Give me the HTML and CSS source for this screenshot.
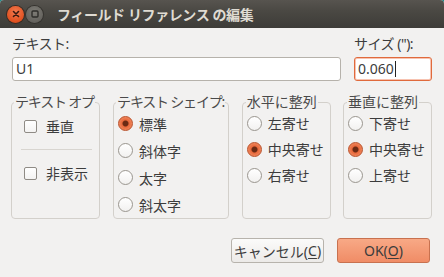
FILE: index.html
```html
<!DOCTYPE html>
<html lang="ja">
<head>
<meta charset="utf-8">
<link rel="stylesheet" href="styles.css">
</head>
<body>
<div class="window">
  <div class="titlebar">
    <span class="wbtn close"><svg width="16" height="16" viewBox="0 0 16 16"><path d="M5.5 5.5 L10.5 10.5 M10.5 5.5 L5.5 10.5" stroke="#3a1a10" stroke-width="1.6" stroke-linecap="round"/></svg></span>
    <span class="wbtn max"><svg width="16" height="16" viewBox="0 0 16 16"><rect x="5" y="5" width="6" height="6" rx="1" fill="none" stroke="#2e2d2a" stroke-width="1.4"/></svg></span>
    <span class="title">フィールド リファレンス の編集</span>
  </div>
  <div class="content">
    <div class="toprow">
      <div class="field grow">
        <div class="flabel">テキスト:</div>
        <div class="entry">U1</div>
      </div>
      <div class="field size">
        <div class="flabel">サイズ ("):</div>
        <div class="entry focus">0.060<span class="caret"></span></div>
      </div>
    </div>
    <div class="groups">
      <fieldset class="grp g1">
        <legend class="tight">テキスト オプ</legend>
        <div class="crow first"><span class="cbox"></span><span>垂直</span></div>
        <div class="sep"></div>
        <div class="crow"><span class="cbox"></span><span>非表示</span></div>
      </fieldset>
      <fieldset class="grp g2">
        <legend class="tight">テキスト シェイプ:</legend>
        <div class="rrow tall"><span class="radio on"></span><span>標準</span></div>
        <div class="rrow tall"><span class="radio"></span><span>斜体字</span></div>
        <div class="rrow tall"><span class="radio"></span><span>太字</span></div>
        <div class="rrow tall"><span class="radio"></span><span>斜太字</span></div>
      </fieldset>
      <fieldset class="grp g3">
        <legend>水平に整列</legend>
        <div class="rrow"><span class="radio"></span><span>左寄せ</span></div>
        <div class="rrow"><span class="radio on"></span><span>中央寄せ</span></div>
        <div class="rrow"><span class="radio"></span><span>右寄せ</span></div>
      </fieldset>
      <fieldset class="grp g4">
        <legend>垂直に整列</legend>
        <div class="rrow"><span class="radio"></span><span>下寄せ</span></div>
        <div class="rrow"><span class="radio on"></span><span>中央寄せ</span></div>
        <div class="rrow"><span class="radio"></span><span>上寄せ</span></div>
      </fieldset>
    </div>
    <div class="buttons">
      <div class="btn">キャンセル(<u>C</u>)</div>
      <div class="btn ok">OK(<u>O</u>)</div>
    </div>
  </div>
</div>
</body>
</html>
```
FILE: styles.css
```css
html { background: #1d8c8c; }
body {
  margin: 0;
  width: 444px;
  height: 277px;
  overflow: hidden;
  font-family: "Noto Sans", "Noto Sans CJK JP", sans-serif;
  font-size: 14px;
  color: #3c3c3c;
}
.window {
  background: #f2f1f0;
  height: 277px;
  border-radius: 4px 4px 0 0;
  overflow: hidden;
}
.titlebar {
  height: 28px;
  background: linear-gradient(#57544f, #4a4843 40%, #3d3c38);
  display: flex;
  align-items: center;
  padding-left: 7px;
  box-sizing: border-box;
}
.wbtn {
  width: 17px;
  height: 17px;
  border-radius: 50%;
  display: flex;
  align-items: center;
  justify-content: center;
  margin-right: 2px;
}
.wbtn svg { display: block; }
.close {
  background: radial-gradient(circle at 50% 35%, #f47a4f, #e0501f 70%, #c53d12);
  box-shadow: 0 0 0 1px #3a2a22;
}
.max {
  background: radial-gradient(circle at 50% 35%, #7e7c76, #65635e 70%, #56544f);
  box-shadow: 0 0 0 1px #35332f;
}
.title {
  margin-left: 12px;
  color: #dfdbd2;
  font-weight: bold;
  font-size: 14px;
  letter-spacing: -0.4px;
}
.content {
  padding: 7px 12px 0 12px;
}
.toprow {
  display: flex;
  gap: 13px;
}
.field.grow { flex: 1; }
.field.size { width: 78px; }
.flabel {
  line-height: 18px;
  height: 18px;
  margin-bottom: 4px;
  white-space: nowrap;
  letter-spacing: -0.5px;
}
.entry {
  height: 24px;
  box-sizing: border-box;
  border: 1px solid #b6b2ab;
  border-radius: 3px;
  background: #ffffff;
  padding-left: 3px;
  line-height: 22px;
  display: flex;
  align-items: center;
}
.entry.focus {
  border-color: #e06a3c;
  box-shadow: inset 0 0 0 1px rgba(233, 84, 32, 0.35);
}
.caret {
  display: inline-block;
  width: 1px;
  height: 16px;
  background: #222;
  margin-left: 1px;
}
.groups {
  display: flex;
  margin-top: 13px;
  margin-left: -1px;
  gap: 13px;
  align-items: stretch;
}
.grp {
  margin: 0;
  padding: 0;
  border: 1px solid #d3d0cb;
  border-radius: 4px;
  min-inline-size: 0;
  height: 125px;
  box-sizing: border-box;
}
.grp legend {
  padding: 0 1px;
  margin-left: 3px;
  line-height: 16px;
  font-size: 14px;
  color: #4a4a4a;
  white-space: nowrap;
}
.grp legend.tight {
  letter-spacing: -1.2px;
  margin-left: 2px;
}
.g1 { width: 90px; }
.g2 { width: 117px; }
.g3 { width: 90px; }
.g4 { width: 90px; margin-left: -1px; }
.crow {
  display: flex;
  align-items: center;
  height: 26px;
  padding-left: 12px;
}
.crow.first { margin-top: 3px; }
.cbox {
  width: 13px;
  height: 13px;
  box-sizing: border-box;
  border: 1px solid #8f8b85;
  border-radius: 2px;
  background: linear-gradient(#ffffff, #f4f3f2);
  margin-right: 9px;
}
.sep {
  height: 1px;
  background: #d8d5d0;
  margin: 10px 7px 10px 9px;
}
.rrow {
  display: flex;
  align-items: center;
  height: 26px;
  padding-left: 4px;
}
.rrow.tall { height: 27px; }
.radio {
  width: 15px;
  height: 15px;
  box-sizing: border-box;
  border-radius: 50%;
  border: 1px solid #9a968f;
  background: linear-gradient(#ffffff, #f2f1f0);
  margin-right: 6px;
  flex: none;
}
.radio.on {
  border-color: #b9502a;
  background: radial-gradient(circle, #6b2a14 0, #6b2a14 2.5px, #e8683b 3.5px, #f08a60 7px);
}
.buttons {
  display: flex;
  justify-content: flex-end;
  gap: 13px;
  margin-top: 19px;
  margin-right: 2px;
}
.btn {
  width: 93px;
  height: 25px;
  box-sizing: border-box;
  border: 1px solid #b7b3ac;
  border-radius: 3px;
  background: linear-gradient(#fbfbfa, #eceae8);
  display: flex;
  align-items: center;
  justify-content: center;
  font-size: 14px;
  color: #3c3c3c;
  white-space: nowrap;
}
.btn.ok {
  border-color: #c8714f;
  background: linear-gradient(#f8a986, #f08c66);
}
.btn u { text-decoration: underline; text-underline-offset: 2px; }
```
